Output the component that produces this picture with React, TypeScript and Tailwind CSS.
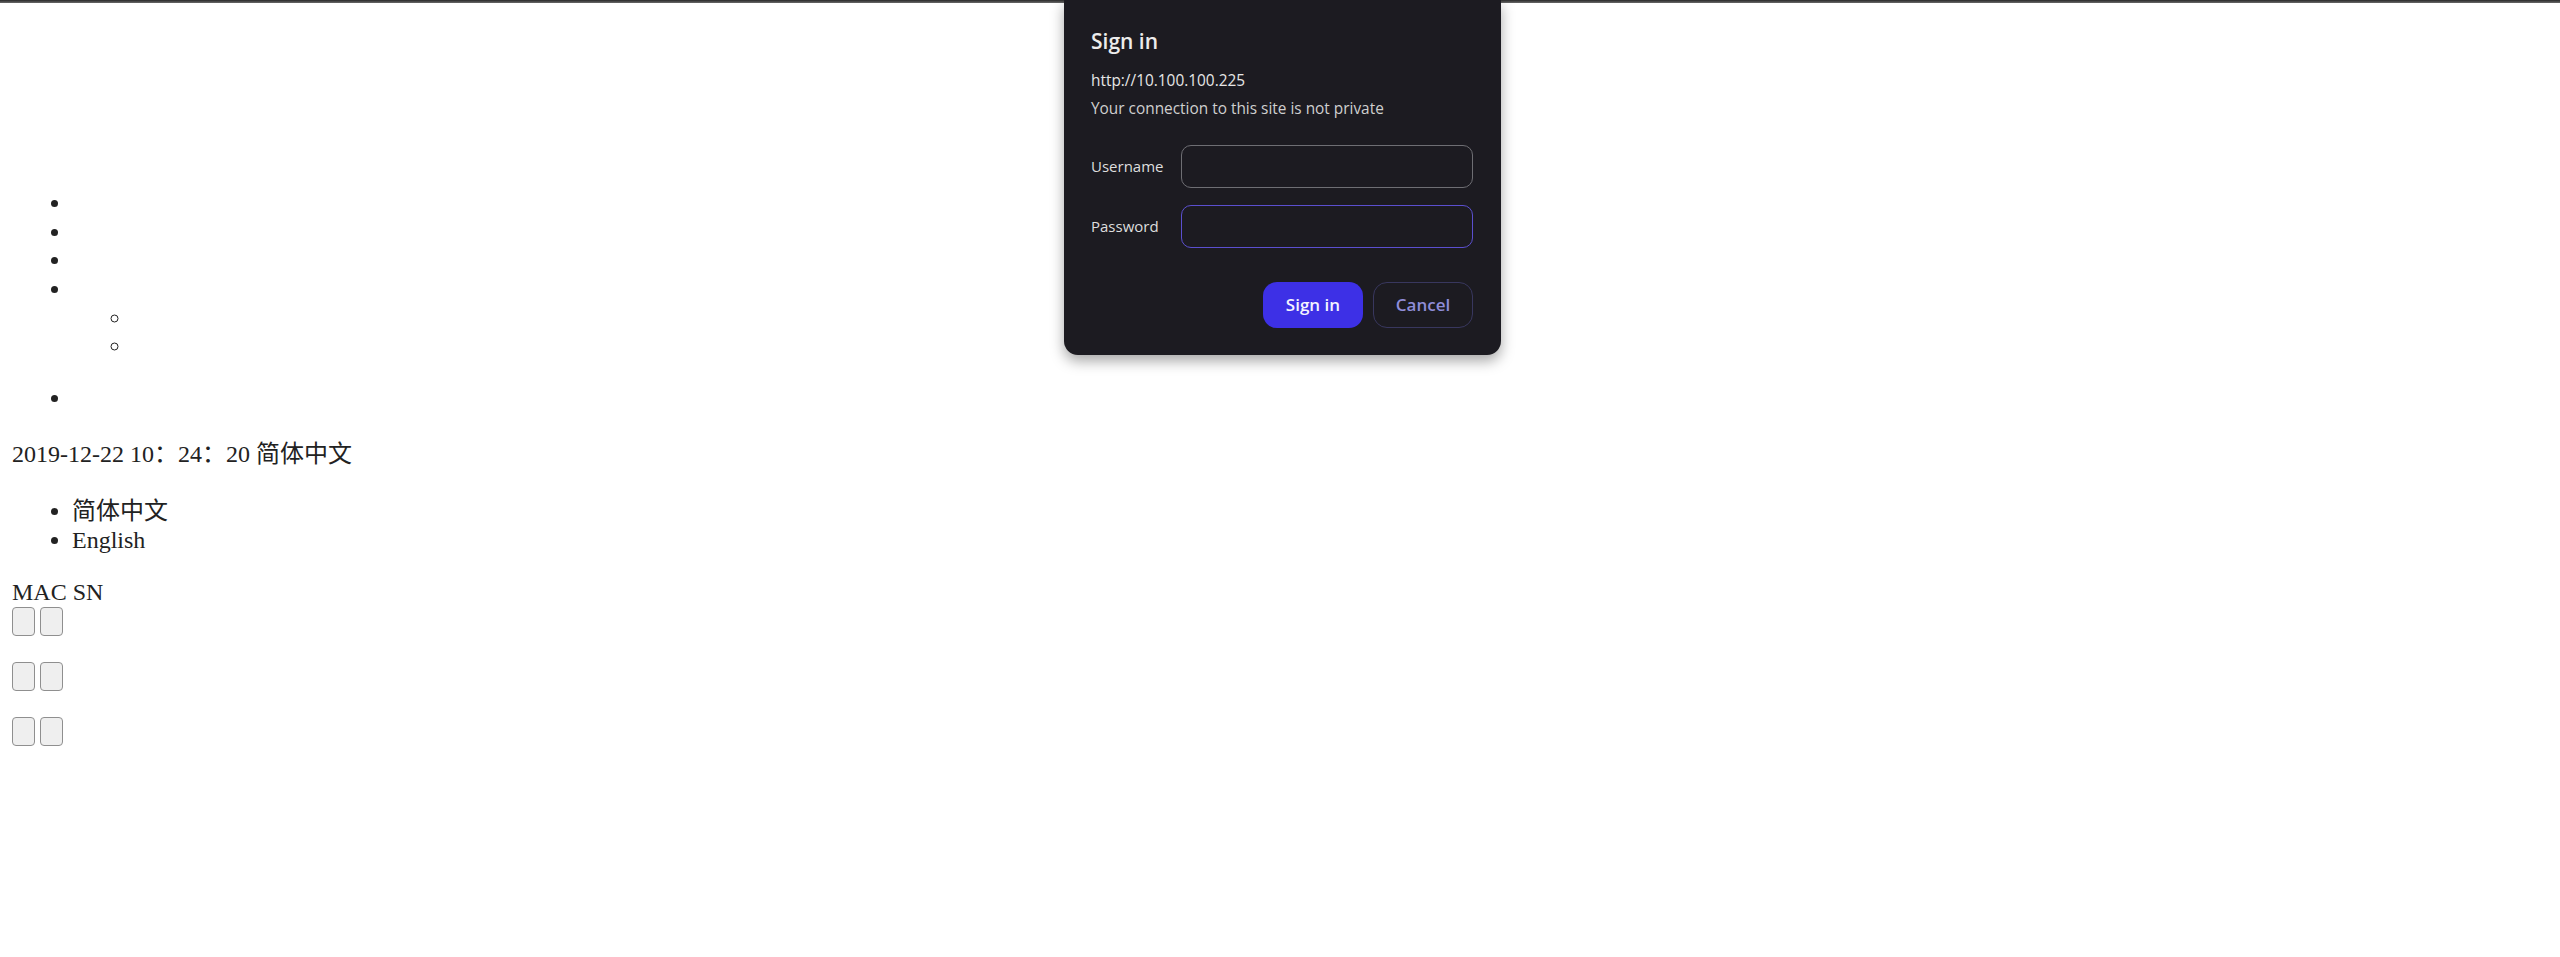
import type { JSX } from "react";

const serif = "font-['Liberation_Serif','Noto_Sans_CJK_SC',serif]";
const sans = "font-['Open_Sans','Noto_Sans',sans-serif]";

function EmptyButton(): JSX.Element {
  return (
    <button
      className="h-[29px] w-[23px] rounded-[4px] border-[1.5px] border-[#8f8f8f] bg-[#efefef]"
      type="button"
    />
  );
}

function ButtonRow({ className }: { className: string }): JSX.Element {
  return (
    <div className={`flex gap-[5px] ${className}`}>
      <EmptyButton />
      <EmptyButton />
    </div>
  );
}

function SignInDialog(): JSX.Element {
  return (
    <div
      className={`absolute left-[1064px] top-0 h-[355px] w-[437px] rounded-b-[14px] bg-[#1c1b21] shadow-[0_6px_14px_rgba(0,0,0,0.35)] ${sans}`}
    >
      <div className="px-[27px] pt-[28px]">
        <h2 className="text-[21px] font-semibold leading-[26px] text-[#ececec]">Sign in</h2>
        <p className="mt-[17px] text-[15.4px] leading-[20px] text-[#e6e6e6]">http://10.100.100.225</p>
        <p className="mt-[8px] text-[15.4px] leading-[20px] text-[#cfcfcf]">Your connection to this site is not private</p>

        <div className="mt-[26px] flex items-center">
          <label className="w-[90px] text-[15px] font-medium text-[#dedede]">Username</label>
          <input className="h-[43px] w-[292px] rounded-[10px] border-[1.5px] border-[#6e6e73] bg-transparent px-3 text-[#eee] outline-none" />
        </div>
        <div className="mt-[17px] flex items-center">
          <label className="w-[90px] text-[15px] font-medium text-[#dedede]">Password</label>
          <input
            className="h-[43px] w-[292px] rounded-[10px] border-[1.5px] border-[#5b4fcf] bg-transparent px-3 text-[#eee] outline-none"
            type="password"
          />
        </div>

        <div className="mt-[34px] flex justify-end gap-[10px] pr-[1px]">
          <button
            className="h-[46px] w-[100px] rounded-[14px] bg-[#3d30e6] text-[17px] font-semibold text-[#f4f4ff]"
            type="button"
          >
            Sign in
          </button>
          <button
            className="h-[46px] w-[100px] rounded-[14px] border border-[#38375e] text-[17px] font-semibold text-[#8f8dd8]"
            type="button"
          >
            Cancel
          </button>
        </div>
      </div>
    </div>
  );
}

export default function App(): JSX.Element {
  return (
    <div className={`relative min-h-[957px] bg-white text-[24px] leading-[28.7px] text-[#222] ${serif}`}>
      <div className="h-[3px] bg-gradient-to-b from-[#2a2a2a] to-[#6a6a6a]" />

      <div className="px-[12px] pt-[186px]">
        <ul className="list-disc pl-[60px]">
          <li className="h-[28.7px]" />
          <li className="h-[28.7px]" />
          <li className="h-[28.7px]" />
          <li>
            {"\u00a0"}
            <ul className="mb-[23px] list-[circle] pl-[60px]">
              <li className="h-[28.7px]" />
              <li className="h-[28.7px]" />
            </ul>
          </li>
          <li className="h-[28.7px]" />
        </ul>

        <p className="mt-[27px]">2019-12-22 10：24：20 简体中文</p>

        <ul className="mt-[28.7px] list-disc pl-[60px]">
          <li>简体中文</li>
          <li>English</li>
        </ul>

        <div className="mt-[23.5px]">MAC SN</div>
        <ButtonRow className="mt-0" />
        <ButtonRow className="mt-[26px]" />
        <ButtonRow className="mt-[26px]" />
      </div>

      <SignInDialog />
    </div>
  );
}
